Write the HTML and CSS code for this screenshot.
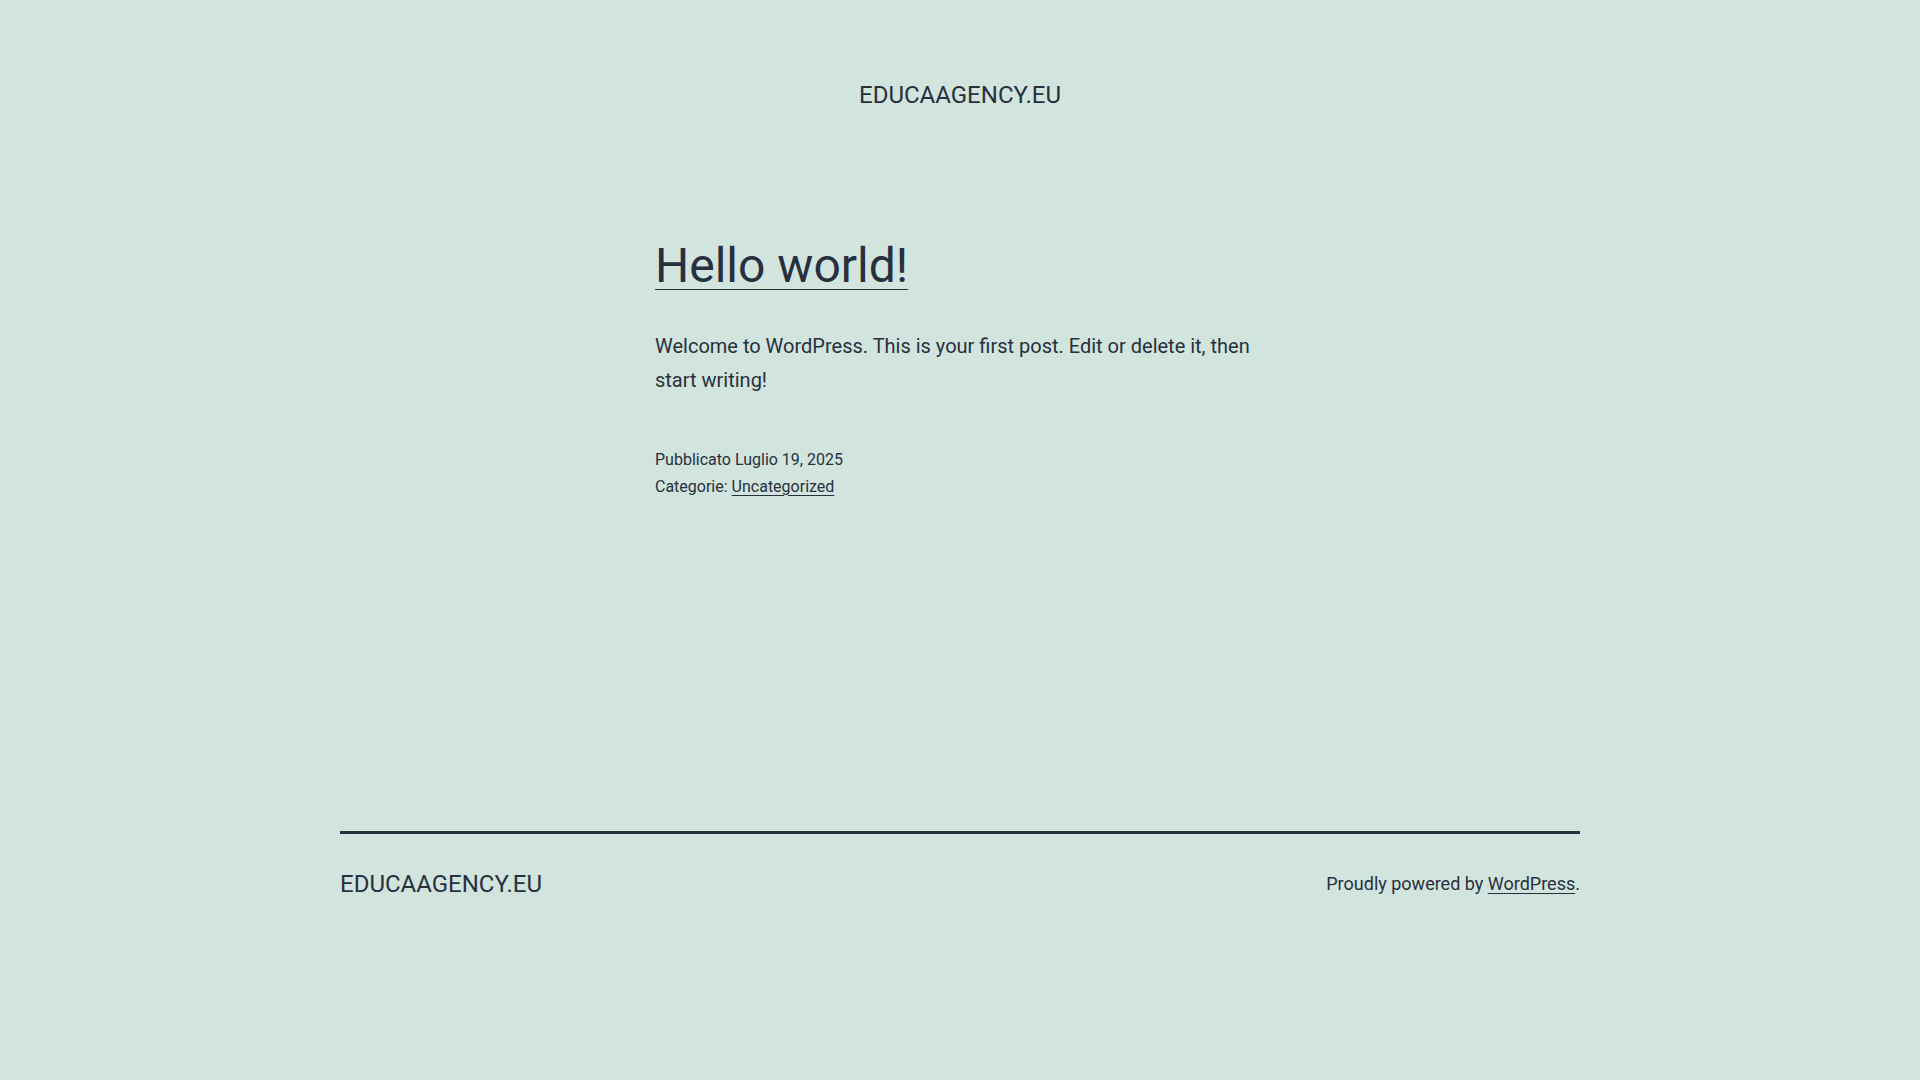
FILE: index.html
```html
<!DOCTYPE html>
<html lang="it">
<head>
<meta charset="utf-8">
<title>EDUCAAGENCY.EU</title>
<link rel="stylesheet" href="styles.css">
</head>
<body>
<header class="site-header">
  <p class="site-title"><a href="#">EDUCAAGENCY.EU</a></p>
</header>
<main class="site-main">
  <article class="post">
    <h2 class="entry-title"><a href="#">Hello world!</a></h2>
    <div class="entry-content">
      <p>Welcome to WordPress. This is your first post. Edit or delete it, then start writing!</p>
    </div>
    <footer class="entry-meta">
      <div class="posted-on">Pubblicato Luglio 19, 2025</div>
      <div class="cat-links">Categorie: <a href="#">Uncategorized</a></div>
    </footer>
  </article>
</main>
<footer class="site-footer">
  <div class="site-info">
    <div class="site-name">EDUCAAGENCY.EU</div>
    <div class="powered-by">Proudly powered by <a href="#">WordPress</a>.</div>
  </div>
</footer>
</body>
</html>
```

FILE: styles.css
```css
html, body {
  margin: 0;
  padding: 0;
}
body {
  background: #d1e4dd;
  color: #28303d;
  font-family: Roboto, "Liberation Sans", sans-serif;
  font-size: 20px;
  line-height: 1.7;
  min-height: 1080px;
}
a {
  color: #28303d;
}
.site-header {
  padding-top: 80px;
  display: flex;
  justify-content: center;
}
.site-title {
  margin: 0;
  font-size: 24px;
  line-height: 1.3;
  text-transform: uppercase;
}
.site-title a {
  text-decoration: none;
}
.site-main {
  width: 610px;
  margin: 0 auto;
  padding-top: 124px;
}
.entry-title {
  margin: 0;
  font-size: 48px;
  font-weight: 400;
  line-height: 1.3;
}
.entry-title a {
  text-decoration: underline;
  text-decoration-thickness: 1px;
  text-underline-offset: 7px;
}
.entry-content p {
  margin: 31px 0 0;
}
.entry-meta {
  margin-top: 49px;
  font-size: 16px;
  line-height: 1.7;
}
.entry-meta a {
  text-decoration-thickness: 1px;
  text-underline-offset: 3px;
}
.site-footer {
  width: 1240px;
  margin: 331px auto 0;
  border-top: 3px solid #28303d;
  padding-top: 35px;
}
.site-info {
  display: flex;
  justify-content: space-between;
  align-items: flex-start;
}
.site-name {
  font-size: 24px;
  line-height: 1.3;
  text-transform: uppercase;
}
.powered-by {
  font-size: 18px;
  line-height: 29px;
}
.powered-by a {
  text-decoration-thickness: 1px;
  text-underline-offset: 3px;
}
```
